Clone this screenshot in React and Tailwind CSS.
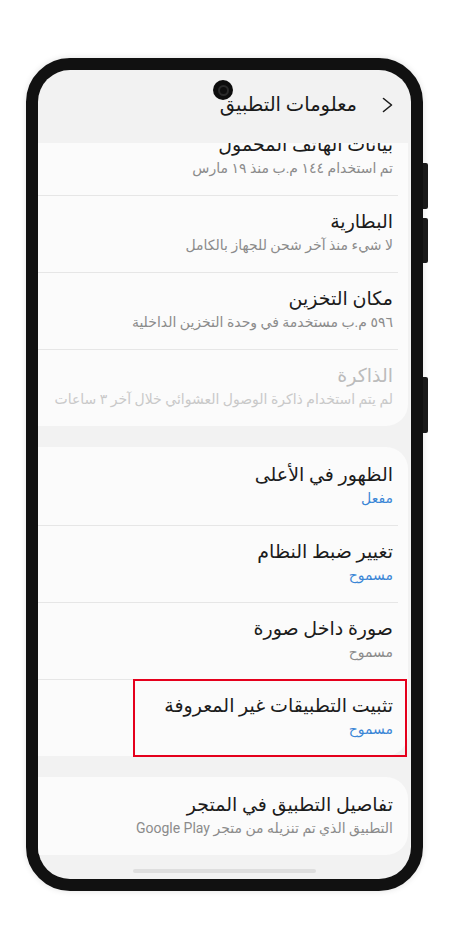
import React from "react";

const Divider = () => <div className="h-px bg-[#e6e6e6] mr-[10px]" />;

const Item = ({ title, sub, subColor = "text-[#8b8b8b]", titleColor = "text-[#1c1c1c]", className = "", children }) => (
  <div className={`relative pt-[14px] pb-[16px] pr-[15px] pl-2 ${className}`}>
    <div className={`text-[19px] leading-[24px] whitespace-nowrap ${titleColor}`}>{title}</div>
    <div className={`text-[14px] leading-[22px] whitespace-nowrap ${subColor}`}>{sub}</div>
    {children}
  </div>
);

const Chevron = () => (
  <svg width="11" height="16" viewBox="0 0 11 16" fill="none">
    <path d="M1.5 1.5 L9.5 8 L1.5 14.5" stroke="#1c1c1c" strokeWidth="1.6" strokeLinecap="round" strokeLinejoin="round" />
  </svg>
);

export default function App() {
  return (
    <div className="w-[450px] h-[928px] bg-white overflow-hidden font-['Roboto','DejaVu_Sans',sans-serif]">
      <div className="relative ml-[26px] mt-[58px] w-[397px] h-[833px]">
        {/* side buttons */}
        <div className="absolute left-[397px] top-[105px] w-[5px] h-[46px] bg-[#1a1a1a] rounded-r-[2px]" />
        <div className="absolute left-[397px] top-[160px] w-[5px] h-[45px] bg-[#1a1a1a] rounded-r-[2px]" />
        <div className="absolute left-[397px] top-[319px] w-[5px] h-[56px] bg-[#1a1a1a] rounded-r-[2px]" />

        <div className="w-full h-full border-[12px] border-[#111111] rounded-[44px] shadow-[0_0_6px_rgba(0,0,0,0.12)] bg-[#111111]">
          <div dir="rtl" className="relative w-full h-full rounded-[32px] overflow-hidden bg-[#f2f2f2] flex flex-col">
            {/* camera */}
            <div className="absolute left-[175px] top-[10px] w-[20px] h-[20px] rounded-full bg-[#0d0d0d] flex items-center justify-center">
              <div className="w-[11px] h-[11px] rounded-full border-[2px] border-[#2a2a2a]" />
            </div>

            {/* header */}
            <div className="h-[73px] shrink-0 flex items-start gap-[25px] pr-[18px] pt-[21px]">
              <div className="mt-[6px]">
                <Chevron />
              </div>
              <div className="text-[19.5px] leading-[28px] text-[#1a1a1a]">معلومات التطبيق</div>
            </div>

            {/* card 1 */}
            <div className="shrink-0 bg-[#fbfbfb] rounded-br-[22px] mr-[3px] overflow-hidden">
              <Item className="-mt-[24px]" title="بيانات الهاتف المحمول" sub="تم استخدام ١٤٤ م.ب منذ ١٩ مارس" />
              <Divider />
              <Item title="البطارية" sub="لا شيء منذ آخر شحن للجهاز بالكامل" />
              <Divider />
              <Item title="مكان التخزين" sub="٥٩٦ م.ب مستخدمة في وحدة التخزين الداخلية" />
              <Divider />
              <Item
                className="pb-[14px]"
                title="الذاكرة"
                titleColor="text-[#bcbcbc]"
                subColor="text-[#c9c9c9]"
                sub="لم يتم استخدام ذاكرة الوصول العشوائي خلال آخر ٣ ساعات"
              />
            </div>

            {/* card 2 */}
            <div className="shrink-0 mt-[21px] bg-[#fbfbfb] rounded-r-[22px] mr-[3px] pt-[2px]">
              <Item title="الظهور في الأعلى" sub="مفعل" subColor="text-[#3a86d6]" />
              <Divider />
              <Item title="تغيير ضبط النظام" sub="مسموح" subColor="text-[#3a86d6]" />
              <Divider />
              <Item title="صورة داخل صورة" sub="مسموح" />
              <Divider />
              <Item title="تثبيت التطبيقات غير المعروفة" sub="مسموح" subColor="text-[#3a86d6]">
                <div className="absolute top-[-1px] bottom-[-1px] right-[1px] left-[95px] border-2 border-[#e5001c]" />
              </Item>
            </div>

            {/* card 3 */}
            <div className="shrink-0 mt-[21px] bg-[#fbfbfb] rounded-r-[22px] mr-[3px] pt-[2px]">
              <Item title="تفاصيل التطبيق في المتجر" sub="التطبيق الذي تم تنزيله من متجر Google Play" />
            </div>

            {/* nav handle */}
            <div className="flex-1 flex justify-center pt-[14px]">
              <div className="w-[183px] h-[4px] rounded-full bg-[#dedede]" />
            </div>
          </div>
        </div>
      </div>
    </div>
  );
}
